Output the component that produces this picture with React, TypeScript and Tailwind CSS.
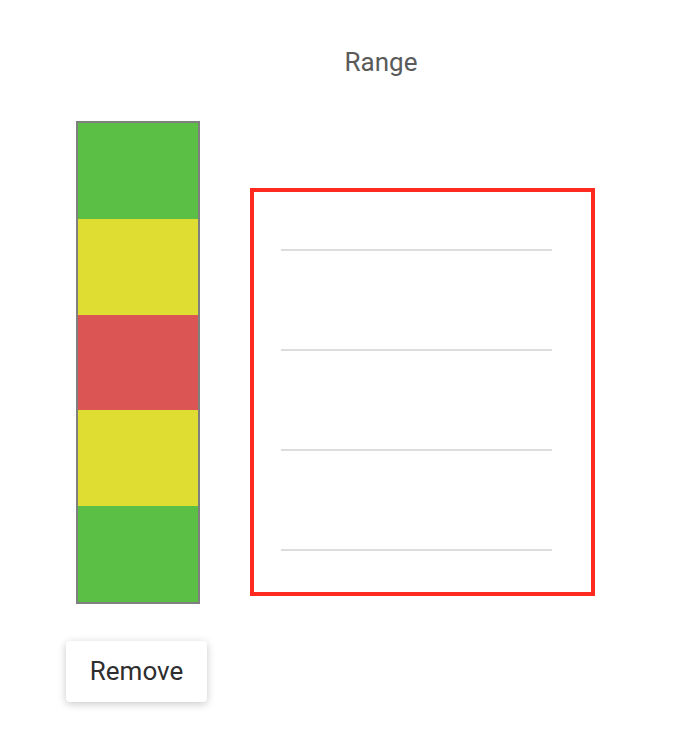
const segments = ["bg-[#5bbe45]", "bg-[#dfdd32]", "bg-[#dc5555]", "bg-[#dfdd32]", "bg-[#5bbe45]"];

export default function App() {
  return (
    <div className="min-h-[730px] w-[698px] bg-white font-['Roboto',sans-serif]">
      <div className="pl-[64px] pt-[47px]">
        <p className="text-center text-[26px] leading-[30px] text-[#5a5a5a]">Range</p>
      </div>
      <div className="mt-[44px] flex pl-[76px]">
        <div className="flex w-[124px] flex-col">
          <div className="flex h-[483px] w-[124px] flex-col border-2 border-[#7f7f7f]">
            {segments.map((c, i) => (
              <div key={i} className={`flex-1 ${c}`} />
            ))}
          </div>
          <button className="-ml-[10px] mt-[37px] h-[61px] w-[141px] shrink-0 rounded-[4px] bg-white text-[26px] text-[#2e2e2e] shadow-[0_2px_8px_rgba(0,0,0,0.22)]">
            Remove
          </button>
        </div>
        <div className="ml-[50px] mt-[67px] flex h-[408px] w-[345px] flex-col gap-[98px] border-4 border-[#ff2a1f] pl-[27px] pr-[39px] pt-[57px]">
          <div className="h-[2px] bg-[#dddddd]" />
          <div className="h-[2px] bg-[#dddddd]" />
          <div className="h-[2px] bg-[#dddddd]" />
          <div className="h-[2px] bg-[#dddddd]" />
        </div>
      </div>
    </div>
  );
}
